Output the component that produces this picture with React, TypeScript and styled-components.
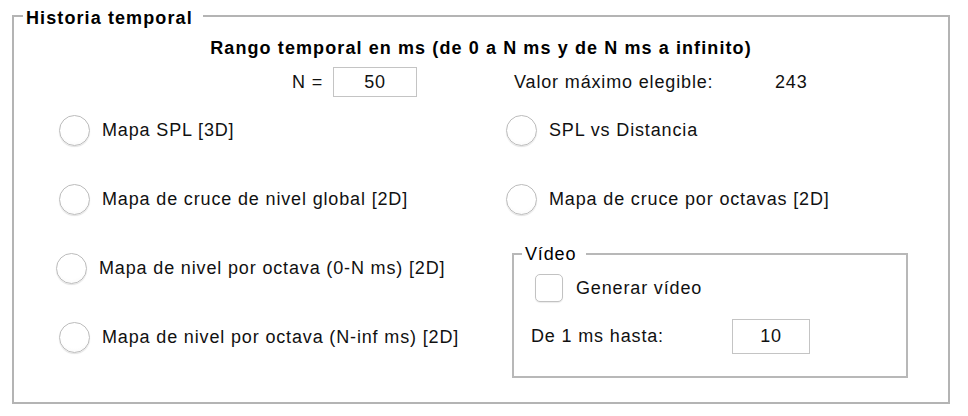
import React from 'react';
import styled, { createGlobalStyle } from 'styled-components';

const GlobalStyle = createGlobalStyle`
  html, body {
    margin: 0;
    padding: 0;
    background: #ffffff;
  }
  body {
    font-family: 'Liberation Sans', Arial, Helvetica, sans-serif;
    color: #111111;
    font-size: 18px;
    letter-spacing: 0.85px;
  }
`;

const Frame = styled.fieldset`
  box-sizing: border-box;
  margin: 4px 0 0 12px;
  padding: 0;
  width: 938px;
  height: 400px;
  border: 2px solid #b4b4b4;
  min-width: 0;
`;

const FrameLegend = styled.legend<{ $bold?: boolean }>`
  margin-left: ${({ $bold }) => ($bold ? '9px' : '8px')};
  padding: ${({ $bold }) => ($bold ? '4px 10px 0 3px' : '0 10px 0 3px')};
  font-size: 18px;
  line-height: 20px;
  font-weight: ${({ $bold }) => ($bold ? 'bold' : 'normal')};
  letter-spacing: ${({ $bold }) => ($bold ? '1.1px' : '0.85px')};
  color: #000;
`;

const Title = styled.div`
  margin-top: 10px;
  height: 20px;
  line-height: 20px;
  text-align: center;
  font-weight: bold;
  letter-spacing: 1.1px;
  color: #000;
`;

const ValueRow = styled.div`
  display: flex;
  align-items: center;
  height: 30px;
  margin-top: 9px;
  padding-left: 267px;
`;

const Label = styled.span<{ $width?: number; $right?: boolean }>`
  display: inline-block;
  white-space: nowrap;
  ${({ $width }) => ($width ? `width: ${$width}px;` : '')}
  ${({ $right }) => ($right ? 'text-align: right; padding-right: 10px; box-sizing: border-box;' : '')}
`;

const NumberBox = styled.div<{ $w: number; $h: number }>`
  box-sizing: border-box;
  width: ${({ $w }) => $w}px;
  height: ${({ $h }) => $h}px;
  border: 1px solid #c4c4c4;
  display: flex;
  align-items: center;
  justify-content: center;
  background: #fff;
`;

const Columns = styled.div`
  display: grid;
  grid-template-columns: 447px 1fr;
  margin-top: 18px;
  padding-left: 45px;
`;

const Column = styled.div`
  display: flex;
  flex-direction: column;
  gap: 38px;
`;

const RadioRow = styled.label<{ $shift?: number }>`
  display: flex;
  align-items: center;
  height: 31px;
  gap: 12px;
  margin-left: ${({ $shift }) => $shift ?? 0}px;
  white-space: nowrap;
`;

const RadioDot = styled.span`
  box-sizing: border-box;
  width: 31px;
  height: 31px;
  border-radius: 50%;
  border: 1px solid #bcbcbc;
  background: radial-gradient(circle at 50% 40%, #ffffff 60%, #f3f3f3 100%);
  box-shadow: 0 1px 1px rgba(0, 0, 0, 0.12);
  flex: none;
`;

const VideoBox = styled.fieldset`
  box-sizing: border-box;
  margin: -9px 0 0 6px;
  padding: 0;
  width: 396px;
  height: 134px;
  border: 2px solid #b8b8b8;
  min-width: 0;
`;

const CheckRow = styled.label`
  display: flex;
  align-items: center;
  gap: 13px;
  margin: 10px 0 0 21px;
  height: 28px;
`;

const CheckBox = styled.span`
  box-sizing: border-box;
  width: 28px;
  height: 28px;
  border-radius: 5px;
  border: 1px solid #c2c2c2;
  background: #fff;
  box-shadow: 0 1px 1px rgba(0, 0, 0, 0.08);
  flex: none;
`;

const RangeRow = styled.div`
  display: flex;
  align-items: center;
  margin: 17px 0 0 17px;
  height: 35px;
`;

const leftOptions = [
  { text: 'Mapa SPL [3D]', shift: 0 },
  { text: 'Mapa de cruce de nivel global [2D]', shift: 0 },
  { text: 'Mapa de nivel por octava (0-N ms) [2D]', shift: -3 },
  { text: 'Mapa de nivel por octava (N-inf ms) [2D]', shift: 0 },
];

const rightOptions = ['SPL vs Distancia', 'Mapa de cruce por octavas [2D]'];

function Radio({ text, shift }: { text: string; shift?: number }) {
  return (
    <RadioRow $shift={shift}>
      <RadioDot />
      <span>{text}</span>
    </RadioRow>
  );
}

export default function App() {
  return (
    <>
      <GlobalStyle />
      <Frame>
        <FrameLegend $bold>Historia temporal</FrameLegend>
        <Title>Rango temporal en ms (de 0 a N ms y de N ms a infinito)</Title>

        <ValueRow>
          <Label $width={52} $right>
            N =
          </Label>
          <NumberBox $w={84} $h={30}>50</NumberBox>
          <Label $width={261} style={{ marginLeft: 97 }}>
            Valor máximo elegible:
          </Label>
          <Label>243</Label>
        </ValueRow>

        <Columns>
          <Column>
            {leftOptions.map((o) => (
              <Radio key={o.text} text={o.text} shift={o.shift} />
            ))}
          </Column>
          <Column>
            {rightOptions.map((t) => (
              <Radio key={t} text={t} />
            ))}
            <VideoBox>
              <FrameLegend>Vídeo</FrameLegend>
              <CheckRow>
                <CheckBox />
                <span>Generar vídeo</span>
              </CheckRow>
              <RangeRow>
                <Label $width={201}>De 1 ms hasta:</Label>
                <NumberBox $w={78} $h={35}>10</NumberBox>
              </RangeRow>
            </VideoBox>
          </Column>
        </Columns>
      </Frame>
    </>
  );
}
